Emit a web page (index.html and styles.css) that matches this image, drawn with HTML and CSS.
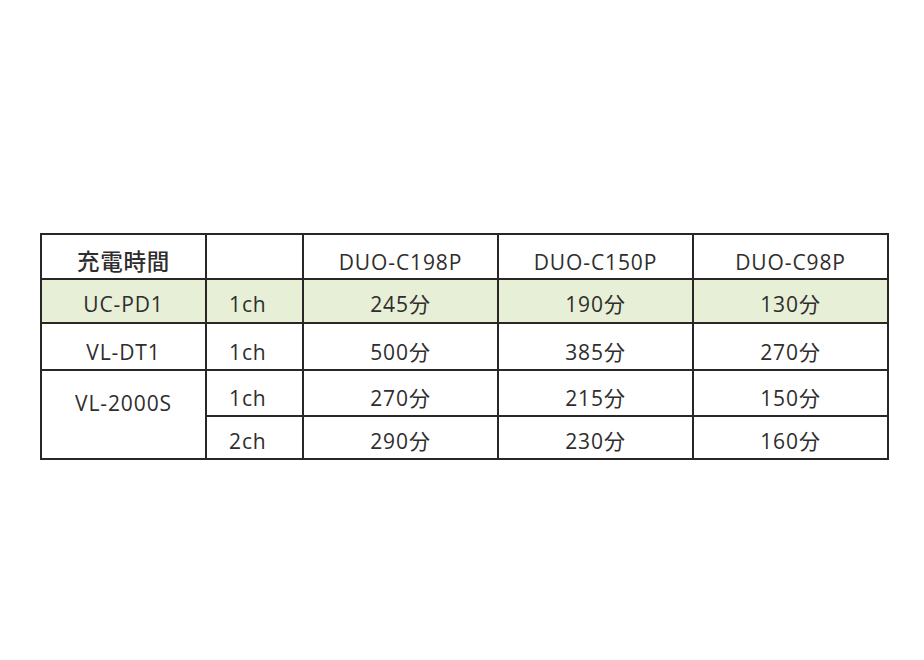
FILE: index.html
```html
<!DOCTYPE html>
<html lang="ja">
<head>
<meta charset="utf-8">
<link rel="stylesheet" href="styles.css">
</head>
<body>
<table class="chart">
  <colgroup>
    <col class="c-model">
    <col class="c-ch">
    <col class="c-val">
    <col class="c-val">
    <col class="c-val">
  </colgroup>
  <tr class="r1">
    <td class="jp">充電時間</td>
    <td></td>
    <td>DUO-C198P</td>
    <td>DUO-C150P</td>
    <td>DUO-C98P</td>
  </tr>
  <tr class="r2 hl">
    <td>UC-PD1</td>
    <td class="ch">1ch</td>
    <td>245分</td>
    <td>190分</td>
    <td>130分</td>
  </tr>
  <tr class="r3">
    <td>VL-DT1</td>
    <td class="ch">1ch</td>
    <td>500分</td>
    <td>385分</td>
    <td>270分</td>
  </tr>
  <tr class="r4">
    <td rowspan="2" class="top">VL-2000S</td>
    <td class="ch">1ch</td>
    <td>270分</td>
    <td>215分</td>
    <td>150分</td>
  </tr>
  <tr class="r5">
    <td class="ch">2ch</td>
    <td>290分</td>
    <td>230分</td>
    <td>160分</td>
  </tr>
</table>
</body>
</html>
```
FILE: styles.css
```css
html, body {
  margin: 0;
  padding: 0;
  background: #ffffff;
}
body {
  font-family: "Open Sans", "Noto Sans CJK JP", sans-serif;
  color: #2f2d2d;
}
.chart {
  margin: 233px 0 0 40px;
  border-collapse: collapse;
  table-layout: fixed;
  width: 847px;
}
.c-model { width: 165px; }
.c-ch { width: 97px; }
.c-val { width: 195px; }
.chart td {
  border: 2px solid #2a2626;
  padding: 7px 0 0 0;
  text-align: center;
  vertical-align: middle;
  font-size: 21px;
  font-weight: 400;
  letter-spacing: 0.9px;
  line-height: 1;
}
.r1 { height: 45px; }
.r2 { height: 44px; }
.r3 { height: 47px; }
.r4 { height: 46px; }
.r5 { height: 43px; }
.chart .r1 td { padding-top: 11px; }
.chart .r3 td { padding-top: 12px; }
.chart .r4 td { padding-top: 11px; }
.chart .r1 td.jp {
  font-size: 22.5px;
  font-weight: 500;
  letter-spacing: 0.8px;
}
.chart .hl td { background: #e7efd7; }
.chart td.ch {
  text-align: left;
  padding-left: 22px;
}
.chart .r4 td.top {
  vertical-align: top;
  padding-top: 22px;
}
```
